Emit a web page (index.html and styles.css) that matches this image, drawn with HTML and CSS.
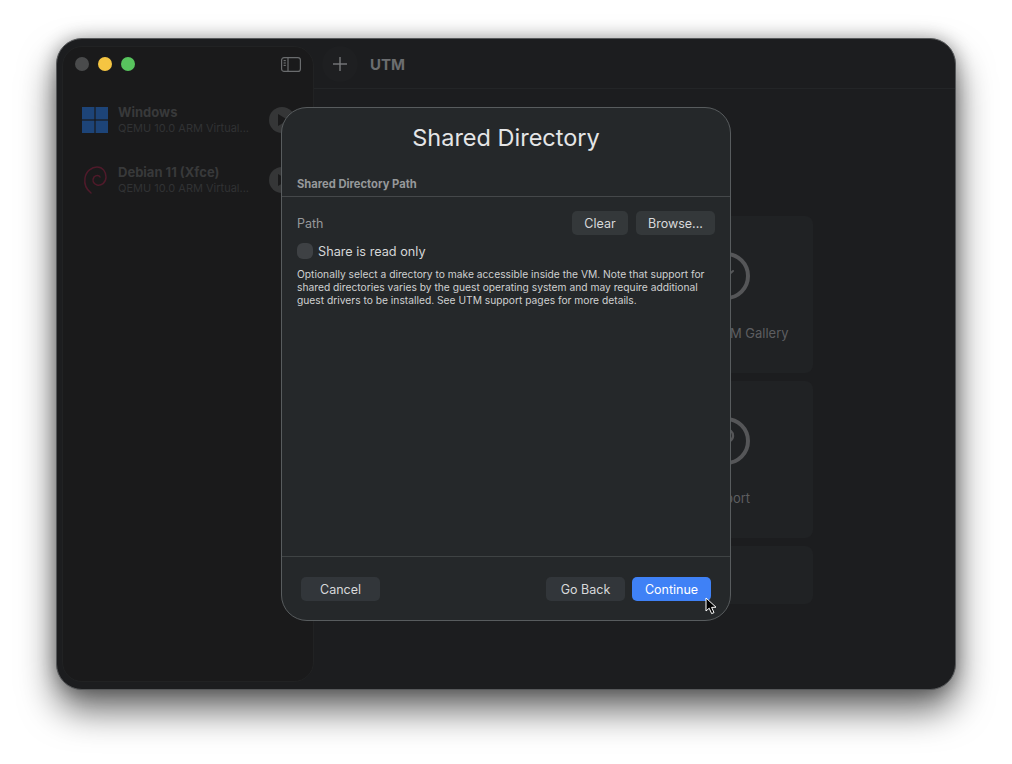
FILE: index.html
```html
<!DOCTYPE html>
<html lang="en">
<head>
<meta charset="UTF-8" />
<meta name="viewport" content="width=device-width, initial-scale=1.0"/>
<title>UTM - Shared Directory</title>
<link rel="stylesheet" href="styles.css">
</head>
<body>

<div class="window">

  <!-- sidebar with the VM list -->
  <aside class="sidebar">
    <div class="side-head">
      <div class="lights">
        <span class="light light-off"></span>
        <span class="light light-min"></span>
        <span class="light light-max"></span>
      </div>
      <svg class="side-toggle" width="20" height="15" viewBox="0 0 20 15" fill="none" stroke="#6a6c6e" stroke-width="1.2">
        <rect x="0.6" y="0.6" width="18.8" height="13.8" rx="2.5" />
        <line x1="7" y1="1" x2="7" y2="14" />
        <line x1="2.6" y1="3.6" x2="4.8" y2="3.6" />
        <line x1="2.6" y1="6" x2="4.8" y2="6" />
        <line x1="2.6" y1="8.4" x2="4.8" y2="8.4" />
      </svg>
    </div>

    <div class="vm-list">
      <div class="vm">
        <svg class="vm-icon" width="26" height="26" viewBox="0 0 26 26" fill="#1d4478">
          <rect x="0" y="0" width="12.4" height="12.4" />
          <rect x="13.6" y="0" width="12.4" height="12.4" />
          <rect x="0" y="13.6" width="12.4" height="12.4" />
          <rect x="13.6" y="13.6" width="12.4" height="12.4" />
        </svg>
        <div class="vm-text">
          <div class="vm-name">Windows</div>
          <div class="vm-sub">QEMU 10.0 ARM Virtual...</div>
        </div>
        <svg class="vm-play" width="26" height="26" viewBox="0 0 26 26">
          <circle cx="13" cy="13" r="13" fill="#353637" />
          <path d="M9 7 L19 13 L9 19 Z" fill="#1a1a1b" />
        </svg>
      </div>
      <div class="vm">
        <svg class="vm-icon" width="26" height="30" viewBox="0 0 26 30" fill="none" stroke="#4f1a2a" stroke-width="1.5" stroke-linecap="round">
          <path d="M9 28 C4 24 2 19 3 13 C4 6 10 2 15 2 C21 2 24 7 24 12 C24 18 19 21 15 20 C11 19 10 15 12 12 C14 10 17 10 18 12" />
        </svg>
        <div class="vm-text">
          <div class="vm-name">Debian 11 (Xfce)</div>
          <div class="vm-sub">QEMU 10.0 ARM Virtual...</div>
        </div>
        <svg class="vm-play" width="26" height="26" viewBox="0 0 26 26">
          <circle cx="13" cy="13" r="13" fill="#353637" />
          <path d="M9 7 L19 13 L9 19 Z" fill="#1a1a1b" />
        </svg>
      </div>
    </div>
  </aside>

  <!-- welcome area, mostly behind the sheet -->
  <div class="content">
    <div class="toolbar">
      <button class="add-btn">
        <svg width="16" height="16" viewBox="0 0 16 16" stroke="#77797b" stroke-width="1.4">
          <line x1="8" y1="1" x2="8" y2="15" />
          <line x1="1" y1="8" x2="15" y2="8" />
        </svg>
      </button>
      <span class="app-title">UTM</span>
    </div>
    <div class="main">
      <div class="cards">
        <div class="card"></div>
        <div class="card">
          <svg class="card-icon" width="48" height="48" viewBox="0 0 48 48" fill="none" stroke="#555658" stroke-width="4" stroke-linecap="round">
            <circle cx="24" cy="24" r="22" />
            <path d="M17 31 L31 19" stroke-width="2" />
          </svg>
          <div class="card-label">Browse UTM Gallery</div>
        </div>
        <div class="card"></div>
        <div class="card">
          <svg class="card-icon" width="48" height="48" viewBox="0 0 48 48" fill="none" stroke="#555658" stroke-width="4" stroke-linecap="round">
            <circle cx="24" cy="24" r="22" />
            <path d="M17 19 C17 10 31 10 31 19 C31 25 24 24 24 30" stroke-width="2.4" />
          </svg>
          <div class="card-label">Support</div>
        </div>
        <div class="card card-low"></div>
        <div class="card card-low"></div>
      </div>
    </div>
  </div>

  <!-- sheet -->
  <div class="sheet">
    <h1 class="sheet-title">Shared Directory</h1>
    <div class="section-title">Shared Directory Path</div>
    <div class="sheet-body">
      <div class="path-row">
        <span class="path-label">Path</span>
        <div class="btn-group">
          <button class="btn btn-clear">Clear</button>
          <button class="btn btn-browse">Browse...</button>
        </div>
      </div>
      <label class="check-row">
        <span class="check"></span>
        <span>Share is read only</span>
      </label>
      <p class="note">Optionally select a directory to make accessible inside the VM. Note that support for shared directories varies by the guest operating system and may require additional guest drivers to be installed. See UTM support pages for more details.</p>
    </div>
    <div class="sheet-foot">
      <button class="btn btn-foot">Cancel</button>
      <div class="btn-group btn-group-tight">
        <button class="btn btn-foot">Go Back</button>
        <button class="btn btn-foot btn-primary">Continue</button>
      </div>
    </div>
  </div>

  <!-- mouse pointer -->
  <svg class="pointer" width="13" height="18" viewBox="0 0 13 18">
    <path d="M1 1 L1 14 L4.2 11.2 L6.6 16.6 L9 15.6 L6.6 10.4 L11 10.2 Z" fill="#000" stroke="#fff" stroke-width="1" />
  </svg>
</div>

</body>
</html>
```

FILE: styles.css
```css
html, body {
  height: 100%;
}

body {
  margin: 0;
  padding: 38px 56px 74px;
  box-sizing: border-box;
  background: #fff;
  font-family: Inter, "Liberation Sans", sans-serif;
  overflow: hidden;
}

.window {
  position: relative;
  display: flex;
  height: 652px;
  box-sizing: border-box;
  background: #1c1d1f;
  border: 1px solid #56585a;
  border-radius: 26px;
  box-shadow: 0 20px 36px rgba(0,0,0,0.6), 0 0 18px rgba(0,0,0,0.3);
}

/* sidebar */
.sidebar {
  width: 252px;
  margin: 7px 0 7px 5px;
  background: #1a1a1b;
  border: 1px solid #212223;
  border-radius: 20px;
  box-sizing: border-box;
}

.side-head {
  display: flex;
  justify-content: space-between;
  align-items: center;
  height: 34px;
  padding: 0 12px 0 12px;
}

.lights {
  display: flex;
  gap: 9px;
}

.light {
  width: 14px;
  height: 14px;
  border-radius: 50%;
}

.light-off { background: #4a4b4c; }
.light-min { background: #f5c542; }
.light-max { background: #58c45e; }

.vm-list {
  display: flex;
  flex-direction: column;
  gap: 20px;
  padding: 19px 18px 0 19px;
}

.vm {
  display: flex;
  align-items: center;
  height: 40px;
}

.vm-icon {
  flex: none;
  width: 26px;
  margin-right: 10px;
}

.vm-text {
  flex: 1;
  min-width: 0;
}

.vm-name {
  font-size: 13px;
  font-weight: 700;
  line-height: 16px;
  color: #38393a;
}

.vm-sub {
  font-size: 11px;
  line-height: 16px;
  color: #313234;
  white-space: nowrap;
}

.vm-play {
  flex: none;
}

/* content */
.content {
  flex: 1;
  display: flex;
  flex-direction: column;
}

.toolbar {
  display: flex;
  align-items: center;
  gap: 12px;
  height: 50px;
  padding-left: 8px;
  border-bottom: 1px solid #232527;
  box-sizing: border-box;
}

.add-btn {
  display: flex;
  align-items: center;
  justify-content: center;
  width: 36px;
  height: 36px;
  padding: 0;
  background: #1e1f21;
  border: none;
  border-radius: 50%;
}

.app-title {
  padding-top: 1px;
  font-size: 15px;
  font-weight: 700;
  color: #6b6d6f;
}

.main {
  flex: 1;
  display: flex;
  justify-content: center;
  padding-top: 127px;
}

.cards {
  display: grid;
  grid-template-columns: 174px 174px;
  grid-template-rows: 157px 157px 58px;
  gap: 8px;
}

.card {
  display: flex;
  flex-direction: column;
  align-items: center;
  padding-top: 36px;
  box-sizing: border-box;
  background: #202224;
  border-radius: 8px;
}

.card-label {
  margin-top: 25px;
  font-size: 13px;
  line-height: 16px;
  color: #5d5e60;
}

/* sheet */
.sheet {
  position: absolute;
  left: 224px;
  top: 68px;
  display: flex;
  flex-direction: column;
  width: 450px;
  height: 514px;
  box-sizing: border-box;
  background: #25282a;
  border: 1px solid #585c5e;
  border-radius: 26px;
}

.sheet-title {
  margin: 0;
  padding-top: 15px;
  font-size: 23.5px;
  font-weight: 400;
  line-height: 30px;
  text-align: center;
  color: #e4e5e6;
}

.section-title {
  margin-top: 24px;
  padding: 0 15px 5px;
  font-size: 11.2px;
  font-weight: 700;
  line-height: 14px;
  color: #96989a;
  border-bottom: 1px solid #45484a;
}

.sheet-body {
  flex: 1;
  padding: 14px 15px 0;
}

.path-row {
  display: flex;
  justify-content: space-between;
  align-items: center;
}

.path-label {
  font-size: 12.5px;
  color: #97999b;
}

.btn-group {
  display: flex;
  gap: 8px;
}

.btn-group-tight {
  gap: 7px;
}

.btn {
  height: 24px;
  padding: 0;
  font-family: inherit;
  font-size: 12.5px;
  color: #d8d9da;
  background: #34383a;
  border: none;
  border-radius: 5px;
}

.btn-clear { width: 56px; }
.btn-browse { width: 79px; }

.check-row {
  display: flex;
  align-items: center;
  gap: 5px;
  margin-top: 8px;
  font-size: 12.7px;
  color: #d5d6d7;
}

.check {
  width: 16px;
  height: 16px;
  background: #3e4144;
  border-radius: 6px;
}

.note {
  margin: 9px 0 0;
  font-size: 10.25px;
  line-height: 13px;
  color: #cfd0d1;
}

.sheet-foot {
  display: flex;
  justify-content: space-between;
  align-items: center;
  height: 62px;
  padding: 1px 19px 0;
  border-top: 1px solid #3f4344;
}

.btn-foot {
  width: 79px;
  background: #32363a;
}

.btn-primary {
  color: #fff;
  background: #3f81f6;
}

.pointer {
  position: absolute;
  left: 648px;
  top: 558px;
}
```
